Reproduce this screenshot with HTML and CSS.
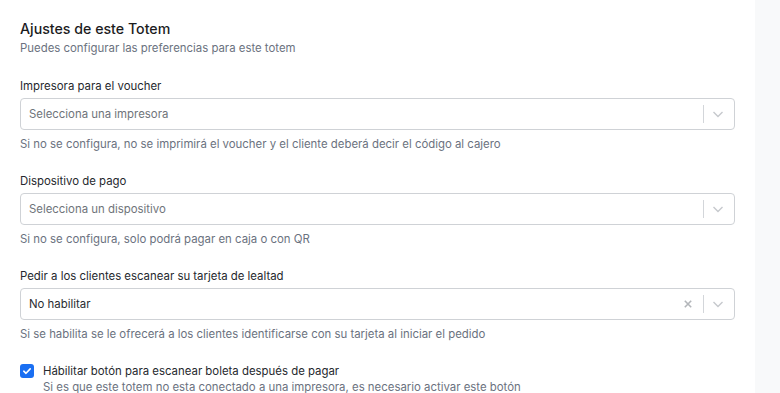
FILE: index.html
```html
<!DOCTYPE html>
<html lang="es">
<head>
  <meta charset="UTF-8">
  <meta name="viewport" content="width=device-width, initial-scale=1.0">
  <title>Ajustes de este Totem</title>
  <link rel="stylesheet" href="styles.css">
</head>
<body>
  <div class="layout">
    <div class="panel">
      <h2 class="title">Ajustes de este Totem</h2>
      <p class="subtitle">Puedes configurar las preferencias para este totem</p>

      <div class="field">
        <label class="label">Impresora para el voucher</label>
        <div class="select">
          <span class="placeholder">Selecciona una impresora</span>
          <div class="indicators">
            <span class="sep"></span>
            <svg class="chevron" width="20" height="20" viewBox="0 0 20 20"><path d="M5.5 8l4.5 4.5 4.5-4.5" fill="none" stroke="currentColor" stroke-width="1.4"/></svg>
          </div>
        </div>
        <p class="help">Si no se configura, no se imprimirá el voucher y el cliente deberá decir el código al cajero</p>
      </div>

      <div class="field">
        <label class="label">Dispositivo de pago</label>
        <div class="select">
          <span class="placeholder">Selecciona un dispositivo</span>
          <div class="indicators">
            <span class="sep"></span>
            <svg class="chevron" width="20" height="20" viewBox="0 0 20 20"><path d="M5.5 8l4.5 4.5 4.5-4.5" fill="none" stroke="currentColor" stroke-width="1.4"/></svg>
          </div>
        </div>
        <p class="help">Si no se configura, solo podrá pagar en caja o con QR</p>
      </div>

      <div class="field">
        <label class="label">Pedir a los clientes escanear su tarjeta de lealtad</label>
        <div class="select">
          <span class="value">No habilitar</span>
          <div class="indicators">
            <svg class="clear" width="20" height="20" viewBox="0 0 20 20"><path d="M6.8 6.8l6.4 6.4M13.2 6.8l-6.4 6.4" fill="none" stroke="currentColor" stroke-width="1.6"/></svg>
            <span class="sep"></span>
            <svg class="chevron" width="20" height="20" viewBox="0 0 20 20"><path d="M5.5 8l4.5 4.5 4.5-4.5" fill="none" stroke="currentColor" stroke-width="1.4"/></svg>
          </div>
        </div>
        <p class="help">Si se habilita se le ofrecerá a los clientes identificarse con su tarjeta al iniciar el pedido</p>
      </div>

      <div class="check-row">
        <span class="checkbox">
          <svg width="14" height="14" viewBox="0 0 14 14"><path d="M3.8 7.2l2.2 2.1 4.2-4.4" fill="none" stroke="#fff" stroke-width="1.6" stroke-linecap="round" stroke-linejoin="round"/></svg>
        </span>
        <div class="check-text">
          <div class="check-label">Hábilitar botón para escanear boleta después de pagar</div>
          <div class="check-help">Si es que este totem no esta conectado a una impresora, es necesario activar este botón</div>
        </div>
      </div>
    </div>
    <div class="side"></div>
  </div>
</body>
</html>
```

FILE: styles.css
```css
body {
  margin: 0;
  font-family: Inter, 'Noto Sans', sans-serif;
  color: #1f2328;
  background-color: #ffffff;
}
.layout {
  display: flex;
  height: 393px;
  overflow: hidden;
}
.panel {
  width: 715px;
  padding: 20px 20px 0 20px;
  background-color: #ffffff;
}
.side {
  flex: 1;
  background-color: #f8f9fa;
}
.title {
  margin: 0;
  font-size: 14.2px;
  font-weight: 500;
  line-height: 18px;
  color: #1c1c1e;
}
.subtitle {
  margin: 2px 0 0 0;
  font-size: 11.4px;
  line-height: 16px;
  color: #6b7280;
}
.field {
  margin-top: 21px;
}
.field + .field {
  margin-top: 20px;
}
.label {
  display: block;
  font-size: 11.4px;
  line-height: 18px;
  color: #26292e;
  margin-bottom: 3px;
}
.select {
  display: flex;
  align-items: center;
  height: 30px;
  border: 1px solid #cfd2d6;
  border-radius: 4px;
  padding-left: 8px;
  background-color: #fff;
}
.placeholder,
.value {
  flex: 1;
  font-size: 11.4px;
  color: #6f747a;
}
.value {
  color: #2a2d31;
}
.indicators {
  display: flex;
  align-items: center;
  color: #c6c9cd;
}
.sep {
  width: 1px;
  height: 18px;
  background-color: #d3d6da;
  margin: 0 4px;
}
.chevron {
  margin-right: 6px;
}
.clear {
  color: #b3b6ba;
  margin-right: 1px;
}
.help {
  margin: 6px 0 0 0;
  font-size: 11.4px;
  line-height: 16px;
  color: #6b7280;
}
.check-row {
  display: flex;
  margin-top: 21px;
}
.checkbox {
  width: 14px;
  height: 14px;
  border-radius: 3px;
  background-color: #1a6ff2;
  margin-top: 1px;
  margin-right: 9px;
  display: flex;
  align-items: center;
  justify-content: center;
}
.check-label {
  font-size: 11.4px;
  line-height: 16px;
  color: #26292e;
}
.check-help {
  font-size: 11.4px;
  line-height: 16px;
  color: #6b7280;
}
```
